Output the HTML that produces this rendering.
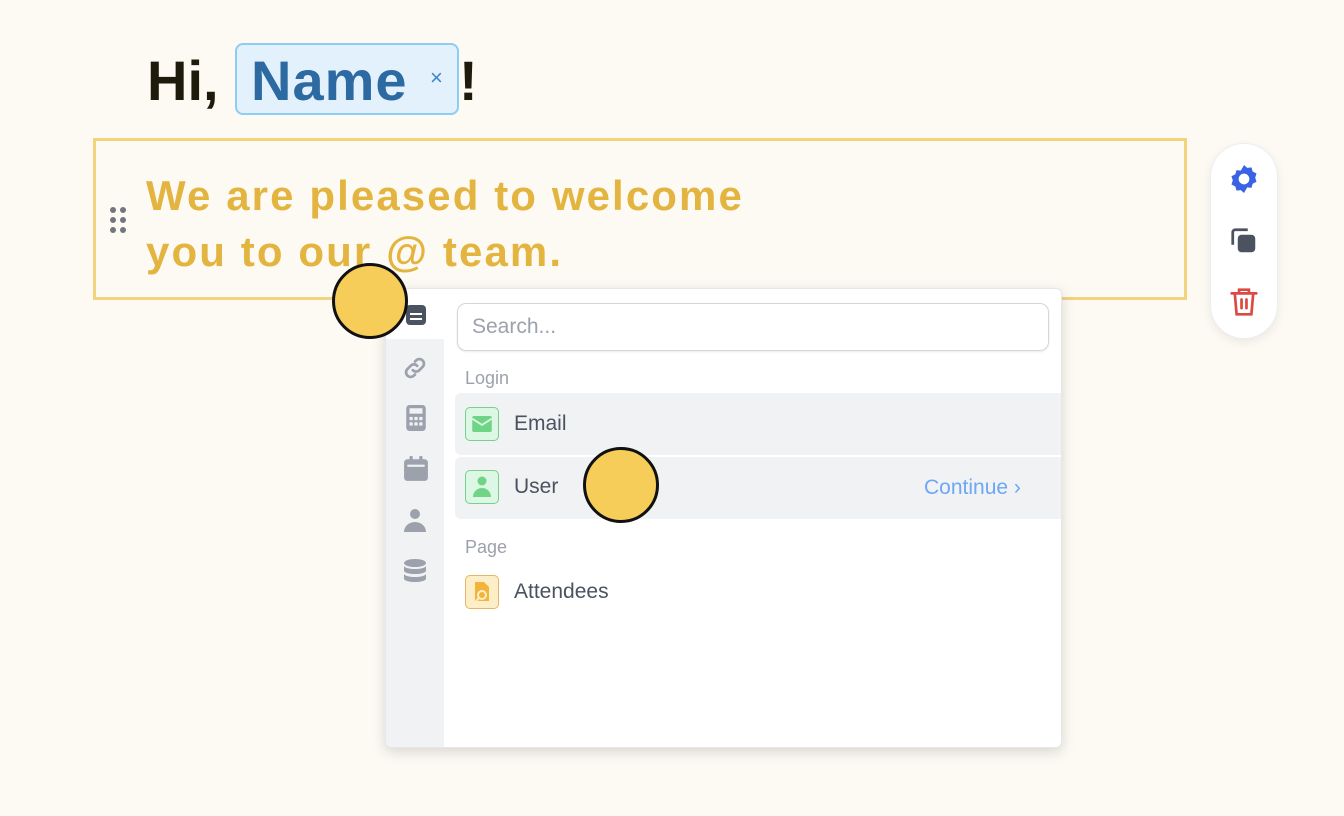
<!DOCTYPE html>
<html><head><style>
body{margin:0;width:1344px;height:816px;background:#fdfaf4;font-family:"Liberation Sans",sans-serif;position:relative;overflow:hidden}
.a{position:absolute}
.hi{left:147px;top:46px;font-size:56px;font-weight:bold;color:#1e1a0c;line-height:70px}
.chip{left:235px;top:43px;width:224px;height:72px;border:2px solid #8ccdf5;border-radius:8px;background:#e2f1fc;box-sizing:border-box}
.box{left:93px;top:138px;width:1094px;height:162px;border:3px solid #f2d37e;box-sizing:border-box}
.wel{left:146px;top:168px;font-size:42px;font-weight:bold;color:#e3b43f;line-height:56px;letter-spacing:2.1px}
.dot{width:76px;height:76px;border-radius:50%;background:#f6cd59;border:3px solid #111;box-sizing:border-box}
.pop{left:385px;top:288px;width:677px;height:460px;background:#fff;border-radius:6px;box-shadow:0 4px 14px rgba(0,0,0,.15);overflow:hidden;border:1px solid #e5e7eb;box-sizing:border-box}
.side{left:0;top:50px;width:58px;height:410px;background:#f1f2f4}
.row{left:69px;width:608px;height:62px;background:#f1f2f4;border-radius:6px 0 0 6px}
.ic{width:34px;height:34px;border-radius:5px;box-sizing:border-box}
.lbl{font-size:21px;color:#4b5260}
.sec{font-size:18px;color:#9ca1ab}
</style></head><body>
<div class="a hi">Hi,</div>
<div class="a chip"></div>
<div class="a" style="left:251px;top:46px;font-size:56px;font-weight:bold;color:#2d6aa1;line-height:70px;letter-spacing:1px">Name</div>
<div class="a" style="left:430px;top:65px;font-size:22px;color:#3d86c9">×</div>
<div class="a" style="left:459px;top:46px;font-size:56px;font-weight:bold;color:#1e1a0c;line-height:70px">!</div>
<div class="a box"></div>
<svg class="a" style="left:109px;top:207px" width="22" height="30"><g fill="#737680"><circle cx="4" cy="3" r="3"/><circle cx="14" cy="3" r="3"/><circle cx="4" cy="13" r="3"/><circle cx="14" cy="13" r="3"/><circle cx="4" cy="23" r="3"/><circle cx="14" cy="23" r="3"/></g></svg>
<div class="a wel">We are pleased to welcome<br>you to our @ team.</div>

<div class="a" style="left:1210px;top:143px;width:68px;height:196px;border-radius:34px;background:#fff;box-shadow:0 3px 10px rgba(0,0,0,.08);border:1px solid #eceef0;box-sizing:border-box"></div>
<svg class="a" style="left:1228px;top:163px" width="32" height="32" viewBox="0 0 24 24"><path fill="#3a63e3" d="M12 1.5l2.4 2.2 3.2-.4.9 3.1 2.9 1.5-1 3.1 1 3.1-2.9 1.5-.9 3.1-3.2-.4L12 22.5l-2.4-2.2-3.2.4-.9-3.1-2.9-1.5 1-3.1-1-3.1 2.9-1.5.9-3.1 3.2.4z"/><circle cx="12" cy="12" r="4" fill="#fff"/></svg>
<svg class="a" style="left:1229px;top:226px" width="30" height="30" viewBox="0 0 24 24"><path d="M3 15V5a2 2 0 0 1 2-2h10" stroke="#4b5260" stroke-width="2.2" fill="none"/><rect x="7" y="7" width="14" height="14" rx="3" fill="#4b5260"/></svg>
<svg class="a" style="left:1229px;top:286px" width="30" height="32" viewBox="0 0 24 26"><g stroke="#dc4a44" stroke-width="2.2" fill="none" stroke-linecap="round"><path d="M2 6h20M8 6V3h8v3M4.5 6l1.5 17h12l1.5-17M10 11v7M14 11v7"/></g></svg>

<div class="a pop">
 <div class="a side"></div>
 <svg class="a" style="left:16px;top:66px" width="26" height="26" viewBox="0 0 24 24"><g stroke="#9ca1ab" stroke-width="2.5" fill="none" stroke-linecap="round"><path d="M10 14a4 4 0 0 0 6 0l3-3a4 4 0 0 0-6-6l-1 1"/><path d="M14 10a4 4 0 0 0-6 0l-3 3a4 4 0 0 0 6 6l1-1"/></g></svg>
 <svg class="a" style="left:19px;top:116px" width="22" height="26" viewBox="0 0 20 24"><rect x="1" y="0" width="18" height="24" rx="3" fill="#9ca1ab"/><rect x="4" y="3" width="12" height="5" fill="#f1f2f4"/><g fill="#f1f2f4"><rect x="4" y="11" width="3" height="3"/><rect x="8.5" y="11" width="3" height="3"/><rect x="13" y="11" width="3" height="3"/><rect x="4" y="16" width="3" height="3"/><rect x="8.5" y="16" width="3" height="3"/><rect x="13" y="16" width="3" height="3"/></g></svg>
 <svg class="a" style="left:17px;top:167px" width="26" height="26" viewBox="0 0 24 24"><rect x="1" y="3" width="22" height="20" rx="3" fill="#9ca1ab"/><rect x="6" y="0" width="3" height="6" rx="1" fill="#9ca1ab"/><rect x="15" y="0" width="3" height="6" rx="1" fill="#9ca1ab"/><rect x="4" y="8" width="16" height="2" fill="#f1f2f4"/></svg>
 <svg class="a" style="left:17px;top:218px" width="24" height="26" viewBox="0 0 24 26"><circle cx="12" cy="7" r="5" fill="#9ca1ab"/><path d="M1 25a11 10 0 0 1 22 0z" fill="#9ca1ab"/></svg>
 <svg class="a" style="left:17px;top:269px" width="24" height="26" viewBox="0 0 24 26"><g fill="#9ca1ab"><ellipse cx="12" cy="5" rx="11" ry="4"/><path d="M1 8c2 4 20 4 22 0v5c-2 4-20 4-22 0z"/><path d="M1 16c2 4 20 4 22 0v5c-2 4-20 4-22 0z"/></g></svg>
 <svg class="a" style="left:18px;top:14px" width="24" height="24" viewBox="0 0 24 24"><rect x="2" y="2" width="20" height="20" rx="4" fill="#4b5260"/><rect x="6" y="10" width="12" height="2" fill="#fff"/><rect x="6" y="15" width="12" height="2" fill="#fff"/></svg>
 <div class="a" style="left:71px;top:14px;width:592px;height:48px;border:1.5px solid #d4d6da;border-radius:9px;box-sizing:border-box;box-shadow:0 1px 2px rgba(0,0,0,.08)"></div>
 <div class="a" style="left:86px;top:26px;font-size:21px;color:#9ca1ab">Search...</div>
 <div class="a sec" style="left:79px;top:79px">Login</div>
 <div class="a row" style="top:104px"></div>
 <div class="a row" style="top:168px"></div>
 <div class="a ic" style="left:79px;top:118px;background:#dcf7e3;border:1.5px solid #79cf8c"></div>
 <svg class="a" style="left:86px;top:127px" width="20" height="16" viewBox="0 0 22 18"><rect x="0" y="0" width="22" height="18" rx="2" fill="#6fd486"/><path d="M0 3l11 7 11-7" stroke="#dcf7e3" stroke-width="2" fill="none"/></svg>
 <div class="a lbl" style="left:128px;top:123px">Email</div>
 <div class="a ic" style="left:79px;top:181px;background:#dcf7e3;border:1.5px solid #79cf8c"></div>
 <svg class="a" style="left:86px;top:186px" width="20" height="24" viewBox="0 0 20 24"><circle cx="10" cy="6" r="4.5" fill="#6fd486"/><path d="M1 22a9 9 0 0 1 18 0z" fill="#6fd486"/></svg>
 <div class="a lbl" style="left:128px;top:186px">User</div>
 <div class="a" style="left:538px;top:187px;font-size:21px;color:#6ea7f5">Continue ›</div>
 <div class="a sec" style="left:79px;top:248px">Page</div>
 <div class="a ic" style="left:79px;top:286px;background:#fcefc7;border:1.5px solid #e8b566"></div>
 <svg class="a" style="left:86px;top:291px" width="20" height="24" viewBox="0 0 20 24"><path d="M3 2h9l5 5v14H3z" fill="#f2b43a"/><circle cx="10" cy="15" r="4" stroke="#fcefc7" stroke-width="2" fill="none"/><path d="M7 18l-3 3" stroke="#fcefc7" stroke-width="2"/></svg>
 <div class="a lbl" style="left:128px;top:291px">Attendees</div>
</div>

<div class="a dot" style="left:332px;top:263px"></div>
<div class="a dot" style="left:583px;top:447px"></div>
</body></html>
